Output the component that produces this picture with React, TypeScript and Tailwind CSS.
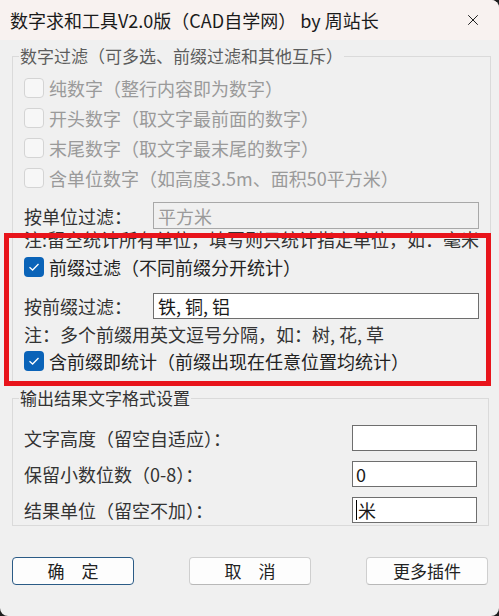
import { X } from 'lucide-react';

const font = { fontFamily: '"Noto Sans CJK SC", "Noto Sans", sans-serif' };

function Box({ checked }: { checked?: boolean }) {
    return checked ? (
        <span className="flex h-[20px] w-[20px] shrink-0 items-center justify-center rounded-[4px] bg-[#0a63b8]">
            <svg width="12" height="10" viewBox="0 0 12 10">
                <path d="M1.5 5.2 L4.6 8 L10.5 2" fill="none" stroke="#fff" strokeWidth="1.3" />
            </svg>
        </span>
    ) : (
        <span className="h-[20px] w-[20px] shrink-0 rounded-[4px] border border-[#d4d4d4] bg-[#f7f7f7]" />
    );
}

function CheckRow({ label, checked, disabled }: { label: string; checked?: boolean; disabled?: boolean }) {
    return (
        <div className="flex h-[30px] items-center gap-[5px]">
            <Box checked={checked} />
            <span className={disabled ? 'text-[#9a9a9a]' : 'text-[#222]'}>{label}</span>
        </div>
    );
}

export default function App() {
    const disabledRows = [
        '纯数字（整行内容即为数字）',
        '开头数字（取文字最前面的数字）',
        '末尾数字（取文字最末尾的数字）',
        '含单位数字（如高度3.5m、面积50平方米）',
    ];

    const outputRows = [
        { label: '文字高度（留空自适应）：', value: '' },
        { label: '保留小数位数（0-8）：', value: '0' },
        { label: '结果单位（留空不加）：', value: '米', caret: true },
    ];

    return (
        <div className="h-[616px] w-[499px] overflow-hidden bg-[#1e1e1e]" style={font}>
            <div className="flex h-full flex-col overflow-hidden rounded-tr-[8px] rounded-b-[8px] bg-[#f0f0f0] text-[18px] leading-[22px]">
                {/* Title bar */}
                <div className="flex h-[40px] shrink-0 items-center justify-between bg-[#f8f2f0] pl-[10px] pr-[17px]">
                    <span className="text-[18px] text-[#1a1a1a]">数字求和工具V2.0版（CAD自学网） by 周站长</span>
                    <X className="h-[18px] w-[18px] text-[#1a1a1a]" strokeWidth={1.3} />
                </div>

                {/* Group 1 */}
                <fieldset className="ml-[12px] mr-[10px] mt-[5px] border border-[#dadada] px-[11px] pt-[6px]">
                    <legend className="-ml-[5px] px-[1px] text-[17px] text-[#5c5c5c]">数字过滤（可多选、前缀过滤和其他互斥）</legend>
                    {disabledRows.map((r) => (
                        <CheckRow key={r} label={r} disabled />
                    ))}
                    <div className="mt-[9px] flex h-[27px] items-center">
                        <span className="w-[129px] text-[#333]">按单位过滤：</span>
                        <div className="flex h-full flex-1 items-center border border-[#a8a8a8] bg-[#f0f0f0] px-[4px] text-[#9a9a9a]">
                            平方米
                        </div>
                    </div>
                    <div className="flex h-[20px] items-center whitespace-nowrap text-[#333]">
                        注:留空统计所有单位，填写则只统计指定单位，如：毫米
                    </div>

                    {/* Highlighted part */}
                    <div className="relative -mb-[3px] -ml-[20px] -mr-[12px] -mt-[16px] border-[5px] border-[#e8141b] pb-[6px] pl-[15px] pr-[7px] pt-[14px]">
                        <CheckRow label="前缀过滤（不同前缀分开统计）" checked />
                        <div className="mt-[11px] flex h-[26px] items-center">
                            <span className="w-[129px] text-[#333]">按前缀过滤：</span>
                            <div className="flex h-full flex-1 items-center border border-[#6e6e6e] bg-white px-[4px] text-[#1a1a1a]">
                                铁, 铜, 铝
                            </div>
                        </div>
                        <div className="mt-[2px] flex h-[26px] items-center text-[#333]">注：多个前缀用英文逗号分隔，如：树, 花, 草</div>
                        <div className="flex h-[28px] items-center gap-[5px]">
                            <Box checked />
                            <span className="text-[#222]">含前缀即统计（前缀出现在任意位置均统计）</span>
                        </div>
                    </div>
                </fieldset>

                {/* Group 2 */}
                <fieldset className="ml-[12px] mr-[10px] mt-[3px] flex flex-col gap-[10px] border border-[#dadada] px-[11px] pb-[2px] pt-[16px]">
                    <legend className="-ml-[5px] px-[1px] text-[17px] text-[#333]">输出结果文字格式设置</legend>
                    {outputRows.map((r) => (
                        <div key={r.label} className="flex h-[26px] items-center">
                            <span className="flex-1 text-[#333]">{r.label}</span>
                            <div className="flex h-full w-[125px] items-center border border-[#6e6e6e] bg-white px-[3px] text-[#1a1a1a]">
                                {r.caret && <span className="mr-[1px] h-[20px] w-[1px] bg-black" />}
                                {r.value}
                            </div>
                        </div>
                    ))}
                </fieldset>

                {/* Buttons */}
                <div className="mt-[31px] flex justify-between pl-[12px] pr-[11px] text-[17px]">
                    <button className="h-[28px] w-[122px] rounded-[4px] border border-[#2b5b86] bg-[#fdfdfd] text-[#222]">
                        确　定
                    </button>
                    <button className="h-[28px] w-[122px] rounded-[4px] border border-[#cfcfcf] border-b-[#b8b8b8] bg-[#fdfdfd] text-[#222]">
                        取　消
                    </button>
                    <button className="h-[28px] w-[122px] rounded-[4px] border border-[#cfcfcf] border-b-[#b8b8b8] bg-[#fdfdfd] text-[#222]">
                        更多插件
                    </button>
                </div>
            </div>
        </div>
    );
}
